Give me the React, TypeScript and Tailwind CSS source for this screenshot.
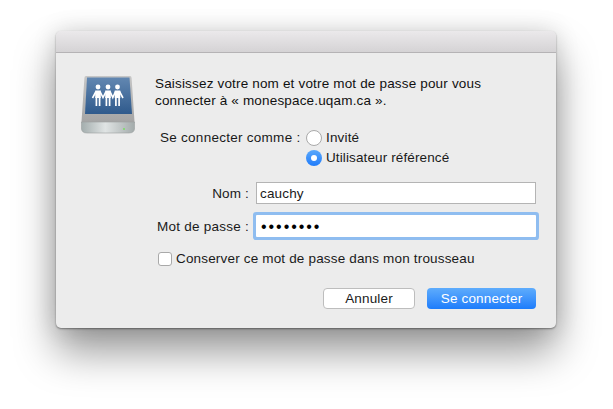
function DriveIcon() {
  return (
    <svg width="54" height="60" viewBox="0 0 54 60" className="block">
      <defs>
        <linearGradient id="blue" x1="0" y1="0" x2="0" y2="1">
          <stop offset="0" stopColor="#6287b1" />
          <stop offset="1" stopColor="#2f5a8c" />
        </linearGradient>
        <linearGradient id="body" x1="0" y1="0" x2="0" y2="1">
          <stop offset="0" stopColor="#c6c6c6" />
          <stop offset="1" stopColor="#a4a4a4" />
        </linearGradient>
        <linearGradient id="front" x1="0" y1="0" x2="1" y2="0">
          <stop offset="0" stopColor="#a3adad" />
          <stop offset="0.45" stopColor="#e0e4e4" />
          <stop offset="1" stopColor="#a3abab" />
        </linearGradient>
      </defs>
      <path d="M5 1 H49 Q50.5 1 50.6 3 L53.6 48 H0.4 L3.4 3 Q3.5 1 5 1 Z" fill="url(#body)" />
      <path d="M6 2.5 H48.5 L51 39 H4 Z" fill="url(#blue)" />
      <path d="M0.4 47 H53.6 V53 Q53.6 58 48 58 H6 Q0.4 58 0.4 53 Z" fill="url(#front)" stroke="#9a9f9f" strokeWidth="0.6" />
      <circle cx="43" cy="54" r="1.1" fill="#7ddc6a" />
      {[17, 27, 36.5].map((x) => (
        <g key={x}>
          <circle cx={x} cy="12" r="2.4" fill="#fff" />
          <path d={`M${x - 2.8} 15.5 H${x + 2.8} V23 H${x - 2.8} Z`} fill="#fff" />
          <path d={`M${x - 1.6} 22 V31 M${x + 1.6} 22 V31`} stroke="#fff" strokeWidth="1.7" fill="none" />
        </g>
      ))}
      <path d="M15 16.5 L11.5 23 M38.5 16.5 L42 23 M19 16.5 L22 22.5 L25 16.5 M29 16.5 L31.8 22.5 L34.5 16.5" stroke="#fff" strokeWidth="1.6" fill="none" />
    </svg>
  );
}

function Radio({ checked }: { checked?: boolean }) {
  return checked ? (
    <span className="flex h-[16px] w-[16px] items-center justify-center rounded-full bg-gradient-to-b from-[#5aa8fb] to-[#1d7bfa]">
      <span className="h-[6px] w-[6px] rounded-full bg-white" />
    </span>
  ) : (
    <span className="block h-[16px] w-[16px] rounded-full border border-[#a9a9a9] bg-white" />
  );
}

export default function App() {
  return (
    <div className="h-[409px] w-[613px] overflow-hidden bg-white pl-[56px] pt-[31px] font-['Liberation_Sans',Arial,sans-serif] text-[13.5px] leading-[17px] tracking-[0.17px] text-[#1a1a1a]">
      <div className="flex h-[297px] w-[500px] flex-col overflow-hidden rounded-[5px] bg-[#ececec] shadow-[0_24px_42px_rgba(0,0,0,0.4),0_0_24px_rgba(0,0,0,0.14),0_1px_2px_rgba(0,0,0,0.4)]">
        <div className="h-[22px] shrink-0 border-b border-[#b5b3b5] bg-gradient-to-b from-[#ebe9eb] to-[#d5d3d5]" />
        <div className="flex flex-1 pl-[25px] pr-[20px]">
          <div className="w-[74px] shrink-0 pt-[22px]">
            <DriveIcon />
          </div>
          <div className="flex min-w-0 flex-1 flex-col pt-[22px]">
            <p className="whitespace-nowrap text-[#111]">
              Saisissez votre nom et votre mot de passe pour vous
              <br />
              connecter à « monespace.uqam.ca ».
            </p>
            <div className="mt-[20px] flex">
              <span className="w-[145px] pl-[5px] tracking-[0.27px] whitespace-nowrap">Se connecter comme :</span>
              <div className="ml-[6px] flex flex-col gap-[3px]">
                <label className="flex items-center gap-[4px]">
                  <Radio />
                  <span>Invité</span>
                </label>
                <label className="flex items-center gap-[4px]">
                  <Radio checked />
                  <span className="tracking-[0.12px]">Utilisateur référencé</span>
                </label>
              </div>
            </div>
            <div className="mt-[16px] flex items-center">
              <span className="w-[94px] text-right whitespace-nowrap">Nom :</span>
              <div className="ml-[7px] flex h-[22px] w-[280px] items-center border border-[#b4b4b4] bg-white pl-[3px]">cauchy</div>
            </div>
            <div className="mt-[11px] flex items-center">
              <span className="w-[94px] text-right tracking-[0.25px] whitespace-nowrap">Mot de passe :</span>
              <div className="ml-[7px] flex h-[22px] w-[280px] items-center rounded-[1px] bg-white pl-[5px] text-[16px] tracking-[1.95px] text-black shadow-[0_0_0_3px_#8fbdf0]">
                ••••••••
              </div>
            </div>
            <label className="mt-[13px] ml-[3px] flex items-center gap-[4px]">
              <span className="block h-[14px] w-[14px] rounded-[3px] border border-[#a9a9a9] bg-white" />
              <span className="whitespace-nowrap">Conserver ce mot de passe dans mon trousseau</span>
            </label>
            <div className="mt-[21px] flex justify-end gap-[12px]">
              <button className="h-[21px] w-[92px] rounded-[4px] border border-[#bdbdbd] bg-white text-[13.5px] leading-none text-[#1a1a1a]">Annuler</button>
              <button className="h-[21px] w-[109px] rounded-[4px] bg-gradient-to-b from-[#5eacfc] to-[#1c7cfb] text-[13.5px] leading-none text-white">Se connecter</button>
            </div>
          </div>
        </div>
      </div>
    </div>
  );
}
